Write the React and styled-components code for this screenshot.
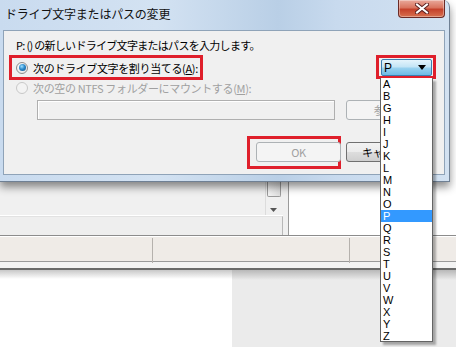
import React from "react";
import styled, { createGlobalStyle } from "styled-components";

const GlobalStyle = createGlobalStyle`
  html, body { margin: 0; padding: 0; background: #ffffff; }
  body { width: 456px; height: 347px; overflow: hidden; }
  * { box-sizing: border-box; }
`;

const LETTERS = "ABGHIJKLMNOPQRSTUVWXYZ".split("");

function Radio({ checked, disabled }) {
  return (
    <RadioCircle $disabled={disabled}>
      {checked && <RadioDot />}
    </RadioCircle>
  );
}

export default function App() {
  return (
    <Screen>
      <GlobalStyle />
      <Dialog>
        <TitleBar>
          <TitleText>ドライブ文字またはパスの変更</TitleText>
          <CloseButton>
            <svg width="14" height="11" viewBox="0 0 14 11">
              <path d="M2 1.5 L12 9.5 M12 1.5 L2 9.5" stroke="#5a1f1f" strokeWidth="4" strokeLinecap="square" />
              <path d="M2 1.5 L12 9.5 M12 1.5 L2 9.5" stroke="#ffffff" strokeWidth="2" strokeLinecap="square" />
            </svg>
          </CloseButton>
        </TitleBar>
        <Client>
          <Prompt>P: () の新しいドライブ文字またはパスを入力します。</Prompt>
          <AssignRow>
            <Highlight $w={194} $h={25}>
              <RadioLabel>
                <Radio checked />
                <span>次のドライブ文字を割り当てる(<u>A</u>):</span>
              </RadioLabel>
            </Highlight>
            <Highlight $w={60} $h={24}>
              <ComboWrap>
                <Combo>
                  <span>P</span>
                  <svg width="8" height="5" viewBox="0 0 8 5">
                    <path d="M0 0 H8 L4 5 Z" fill="#000" />
                  </svg>
                </Combo>
                <DropList>
                  {LETTERS.map((l) => (
                    <DropItem key={l} $selected={l === "P"}>{l}</DropItem>
                  ))}
                </DropList>
              </ComboWrap>
            </Highlight>
          </AssignRow>
          <MountRow>
            <Radio disabled />
            <span>次の空の NTFS フォルダーにマウントする(<u>M</u>):</span>
          </MountRow>
          <PathRow>
            <PathInput />
            <PushButton $disabled>参照...</PushButton>
          </PathRow>
          <ButtonRow>
            <Highlight $w={94} $h={33} $pad="3px 3px 5px 6px">
              <PushButton $disabled>OK</PushButton>
            </Highlight>
            <PushButton>キャンセル</PushButton>
          </ButtonRow>
        </Client>
      </Dialog>
      <Backdrop>
        <PaneRow>
          <LeftPane>
            <ListArea>
              <VScroll>
                <ScrollThumb />
                <ScrollArrow>
                  <svg width="7" height="4" viewBox="0 0 7 4">
                    <path d="M0 0 H7 L3.5 4 Z" fill="#555" />
                  </svg>
                </ScrollArrow>
              </VScroll>
            </ListArea>
            <HScroll />
          </LeftPane>
          <Splitter />
          <RightPane />
        </PaneRow>
        <StatusBar>
          <StatusCell $w={153} />
          <StatusCell $w={197} />
          <StatusCell />
        </StatusBar>
        <LowerArea>
          <WhiteSide />
          <GraySide />
        </LowerArea>
      </Backdrop>
    </Screen>
  );
}

const Screen = styled.div`
  width: 456px;
  height: 347px;
  display: flex;
  flex-direction: column;
  font-family: "Noto Sans CJK JP", "Liberation Sans", sans-serif;
  color: #000;
  overflow: hidden;
`;

const Dialog = styled.div`
  position: relative;
  z-index: 2;
  width: 450px;
  height: 182px;
  flex-shrink: 0;
  display: flex;
  flex-direction: column;
  background: linear-gradient(90deg, #c9dbef 0%, #d3e2f2 35%, #b9cfe6 62%, #c8daee 75%, #d2e1f1 100%);
  border-right: 1px solid #6f8094;
  border-bottom: 1px solid #6f8094;
  border-top-right-radius: 7px;
  box-shadow: 0 5px 9px rgba(0, 0, 0, 0.45);
`;

const TitleBar = styled.div`
  height: 30px;
  display: flex;
  align-items: flex-start;
  justify-content: space-between;
  padding-left: 5px;
`;

const TitleText = styled.div`
  font-size: 12px;
  line-height: 14px;
  margin-top: 7px;
  letter-spacing: -0.2px;
  color: #111;
`;

const CloseButton = styled.div`
  width: 47px;
  height: 18px;
  margin-right: 4px;
  display: flex;
  align-items: center;
  justify-content: center;
  border: 1px solid #6b2a26;
  border-top: none;
  border-radius: 0 0 4px 4px;
  background: linear-gradient(180deg, #e9a99c 0%, #d9745f 45%, #c5412b 55%, #d7704f 100%);
  box-shadow: inset 0 0 0 1px rgba(255, 255, 255, 0.35);
`;

const Client = styled.div`
  height: 145px;
  margin: 0 4px 0 3px;
  border: 1px solid #8fa3b8;
  background: #f0f0f0;
  display: flex;
  flex-direction: column;
  font-size: 11px;
  letter-spacing: -0.35px;
`;

const Prompt = styled.div`
  height: 16px;
  line-height: 16px;
  margin: 6px 0 0 12px;
  letter-spacing: -0.7px;
`;

const AssignRow = styled.div`
  display: flex;
  justify-content: space-between;
  align-items: flex-start;
  margin: 2px 8px 0 5px;
`;

const Highlight = styled.div`
  width: ${(p) => p.$w}px;
  height: ${(p) => p.$h}px;
  border: 3px solid #df1f2b;
  padding: ${(p) => p.$pad || "0"};
  display: flex;
`;

const RadioLabel = styled.label`
  display: flex;
  align-items: center;
  gap: 5px;
  padding-left: 4px;
  height: 100%;
`;

const RadioCircle = styled.span`
  width: 12px;
  height: 12px;
  border-radius: 50%;
  flex-shrink: 0;
  display: flex;
  align-items: center;
  justify-content: center;
  border: 1px solid ${(p) => (p.$disabled ? "#c8c8c8" : "#8d8d8d")};
  background: ${(p) =>
    p.$disabled ? "#f3f3f3" : "radial-gradient(circle at 40% 35%, #ffffff, #e0e0e0)"};
`;

const RadioDot = styled.span`
  width: 7px;
  height: 7px;
  border-radius: 50%;
  background: radial-gradient(circle at 40% 35%, #9fe0ff 0%, #2b8acb 45%, #0d4f85 100%);
`;

const ComboWrap = styled.div`
  position: relative;
  width: 100%;
  padding: 1px 1px 0 2px;
`;

const Combo = styled.div`
  height: 17px;
  border: 1px solid #3c7fb1;
  border-radius: 2px;
  display: flex;
  align-items: center;
  justify-content: space-between;
  padding: 0 5px 0 2px;
  font-family: "Liberation Sans", sans-serif;
  font-size: 12px;
  letter-spacing: 0;
  background: linear-gradient(180deg, #e5f4fc 0%, #c4e5f6 45%, #98d1ef 55%, #6dbbe6 100%);
`;

const DropList = styled.div`
  position: absolute;
  top: 20px;
  left: 1px;
  width: 53px;
  height: 264px;
  background: #fff;
  border: 1px solid #646464;
  border-top: none;
  box-shadow: 3px 3px 2px rgba(0, 0, 0, 0.3);
  z-index: 5;
  overflow: hidden;
`;

const DropItem = styled.div`
  height: 12px;
  line-height: 12px;
  padding-left: 2px;
  font-family: "Liberation Sans", sans-serif;
  font-size: 11px;
  letter-spacing: 0;
  color: ${(p) => (p.$selected ? "#fff" : "#000")};
  background: ${(p) => (p.$selected ? "#3399ff" : "transparent")};
`;

const MountRow = styled.div`
  display: flex;
  align-items: center;
  gap: 5px;
  height: 16px;
  padding-left: 12px;
  color: #a0a0a0;
`;

const PathRow = styled.div`
  display: flex;
  align-items: center;
  gap: 11px;
  margin: 4px 0 0 33px;
`;

const PathInput = styled.div`
  width: 298px;
  height: 20px;
  border: 1px solid #afafaf;
  background: #f0f0f0;
  box-shadow: inset 1px 1px 0 #fff;
`;

const PushButton = styled.div`
  width: 85px;
  height: 20px;
  flex-shrink: 0;
  border: 1px solid ${(p) => (p.$disabled ? "#adb2b5" : "#707070")};
  border-radius: 3px;
  display: flex;
  align-items: center;
  justify-content: center;
  color: ${(p) => (p.$disabled ? "#a0a0a0" : "#000")};
  background: ${(p) =>
    p.$disabled ? "#f4f4f4" : "linear-gradient(180deg, #f2f2f2 0%, #ebebeb 50%, #dddddd 51%, #cfcfcf 100%)"};
`;

const ButtonRow = styled.div`
  display: flex;
  align-items: flex-start;
  gap: 5px;
  margin: 16px 0 0 243px;
  & > ${PushButton} { margin-top: 6px; }
`;

const Backdrop = styled.div`
  flex: 1;
  display: flex;
  flex-direction: column;
`;

const PaneRow = styled.div`
  height: 53px;
  display: flex;
  background: #f0f0f0;
`;

const LeftPane = styled.div`
  width: 283px;
  display: flex;
  flex-direction: column;
`;

const ListArea = styled.div`
  flex: 1;
  display: flex;
  justify-content: flex-end;
  padding-right: 2px;
  border-bottom: 1px solid #fff;
`;

const VScroll = styled.div`
  width: 16px;
  margin-top: -4px;
  display: flex;
  flex-direction: column;
  justify-content: space-between;
  align-items: center;
  border-left: 1px solid #dcdcdc;
`;

const ScrollThumb = styled.div`
  width: 14px;
  height: 19px;
  border: 1px solid #9a9a9a;
  border-top: none;
  border-radius: 0 0 2px 2px;
  background: linear-gradient(90deg, #f4f4f4, #dedede);
`;

const ScrollArrow = styled.div`
  height: 10px;
  display: flex;
  align-items: center;
`;

const HScroll = styled.div`
  height: 19px;
  background: #eeeeee;
  border-top: 1px solid #e2e2e2;
  border-right: 1px solid #b8b8b8;
`;

const Splitter = styled.div`
  width: 6px;
  background: #f0f0f0;
  border-right: 1px solid #9a9a9a;
`;

const RightPane = styled.div`
  flex: 1;
  background: #fff;
`;

const StatusBar = styled.div`
  height: 35px;
  display: flex;
  border-top: 1px solid #8c8c8c;
  padding: 2px 0 0;
  background: linear-gradient(180deg, #ffffff 0 1px, #efebe7 1px 25px, #9a9a9a 25px 26px, #f3f3f3 26px 32px, #6a6a6a 32px 33px);
`;

const StatusCell = styled.div`
  width: ${(p) => (p.$w ? `${p.$w}px` : "auto")};
  flex: ${(p) => (p.$w ? "none" : "1")};
  height: 25px;
  border-right: ${(p) => (p.$w ? "1px solid #b5b1ad" : "none")};
`;

const LowerArea = styled.div`
  flex: 1;
  display: flex;
`;

const WhiteSide = styled.div`
  width: 232px;
  background: linear-gradient(180deg, #c8c8c8 0px, #ffffff 9px);
`;

const GraySide = styled.div`
  flex: 1;
  background: linear-gradient(180deg, #b8b8b8 0px, #ebebeb 10px);
`;
